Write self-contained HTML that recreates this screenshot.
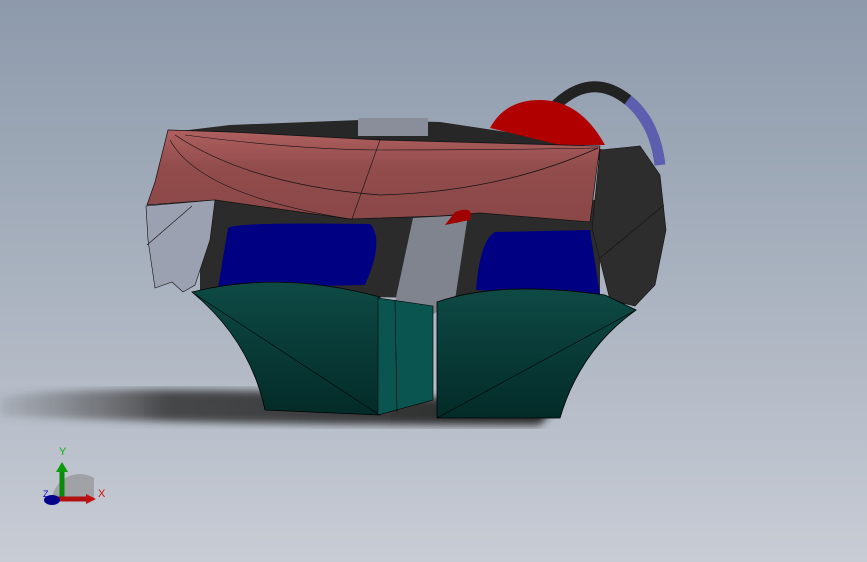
<!DOCTYPE html>
<html><head><style>
html,body{margin:0;padding:0;width:867px;height:562px;overflow:hidden}
body{background:linear-gradient(#8d9aab 0%,#a9b2bf 50%,#c8ccd5 100%);font-family:"Liberation Sans",sans-serif}
svg{position:absolute;left:0;top:0}
</style></head><body>
<svg width="867" height="562" viewBox="0 0 867 562">
<defs>
<linearGradient id="sh" x1="0" x2="1"><stop offset="0" stop-color="#555" stop-opacity="0.15"/><stop offset="0.3" stop-color="#333" stop-opacity="0.85"/><stop offset="1" stop-color="#2a2a2a"/></linearGradient>
<linearGradient id="tl" x1="0" y1="0" x2="0" y2="1"><stop offset="0" stop-color="#0e4a45"/><stop offset="1" stop-color="#032b28"/></linearGradient>
<linearGradient id="pk" x1="0" y1="0" x2="0" y2="1"><stop offset="0" stop-color="#b06060"/><stop offset="0.4" stop-color="#924c4c"/><stop offset="1" stop-color="#8a4747"/></linearGradient>
<filter id="bl"><feGaussianBlur stdDeviation="4"/></filter>
</defs>
<path d="M0,398 Q40,387 260,391 L560,402 L540,425 Q200,425 0,416 Z" fill="url(#sh)" filter="url(#bl)"/>
<path d="M553,108 Q590,70 628,100" stroke="#222" stroke-width="11" fill="none"/>
<path d="M628,100 Q655,122 660,165" stroke="#5b5fae" stroke-width="11" fill="none"/>
<path d="M200,198 L600,200 L600,300 L200,295 Z" fill="#2b2b2b"/>
<path d="M172,132 L230,125 L360,120 L440,122 L560,140 L605,150 L600,160 L175,150 Z" fill="#272727"/>
<rect x="358" y="118" width="70" height="18" fill="#8a8e9a"/>
<path d="M490,128 Q505,100 540,100 Q580,100 605,145 L560,145 Z" fill="#b00000"/>
<path d="M168,130 L230,132 L380,140 L600,146 L596,175 L590,222 L480,213 L440,216 L350,219 L300,212 L215,200 L147,205 L155,182 Z" fill="url(#pk)" stroke="#111" stroke-width="0.7"/>
<path d="M175,135 Q250,185 380,195 Q500,192 598,148" fill="none" stroke="#111" stroke-width="0.7"/>
<path d="M185,135 Q300,150 380,150 Q500,150 598,148" fill="none" stroke="#111" stroke-width="0.6"/>
<path d="M170,140 Q200,195 350,219" fill="none" stroke="#111" stroke-width="0.6"/>
<path d="M380,140 L352,219" fill="none" stroke="#111" stroke-width="0.6"/>
<path d="M146,206 L215,200 L210,240 L195,285 L183,292 L172,282 L155,288 L148,240 Z" fill="#9ca1b1" stroke="#111" stroke-width="0.6"/>
<path d="M147,245 L192,206" stroke="#111" stroke-width="0.6"/>
<path d="M600,150 L640,146 L660,175 L666,230 L655,285 L635,306 L610,300 L592,228 Z" fill="#2d2d2d" stroke="#111" stroke-width="0.6"/>
<path d="M600,258 L664,205" stroke="#111" stroke-width="0.6"/>
<path d="M228,228 Q235,222 370,224 Q385,240 365,285 L218,288 Z" fill="#000082"/>
<path d="M495,232 L590,230 L600,295 L476,290 Q480,240 495,232 Z" fill="#000082"/>
<path d="M413,218 L468,215 L455,300 L432,315 L395,302 Z" fill="#80848f"/>
<path d="M455,212 Q475,205 470,220 L445,225 Z" fill="#a00000"/>
<path d="M192,292 Q280,270 380,297 L380,415 L265,410 Q250,340 192,292 Z" fill="url(#tl)" stroke="#000" stroke-width="0.8"/>
<path d="M193,293 L378,414" stroke="#000" stroke-width="0.6"/>
<path d="M378,298 L433,306 L433,400 L378,415 Z" fill="#0a5550" stroke="#000" stroke-width="0.6"/>
<path d="M395,300 L397,412" stroke="#000" stroke-width="0.6"/>
<path d="M437,302 Q500,280 605,295 L636,310 Q580,350 560,418 L437,418 Z" fill="url(#tl)" stroke="#000" stroke-width="0.8"/>
<path d="M437,418 L636,310" stroke="#000" stroke-width="0.6"/>
<path d="M52,498 A28,28 0 0 1 94,478 L94,498 Z" fill="#8a8a8a" opacity="0.6"/>
<line x1="62" y1="498" x2="62" y2="470" stroke="#0a8a0a" stroke-width="5"/>
<path d="M56,472 L62,462 L68,472 Z" fill="#0a9a0a"/>
<line x1="55" y1="499" x2="88" y2="499" stroke="#b01010" stroke-width="5"/>
<path d="M86,494 L96,499 L86,504 Z" fill="#c01010"/>
<ellipse cx="52" cy="500" rx="8" ry="5" fill="#00008a"/>
<text x="59" y="455" font-size="11" fill="#10b010">Y</text>
<text x="98" y="497" font-size="11" fill="#d01010">X</text>
<text x="43" y="497" font-size="9" fill="#0000c0">Z</text>
</svg>
</body></html>
